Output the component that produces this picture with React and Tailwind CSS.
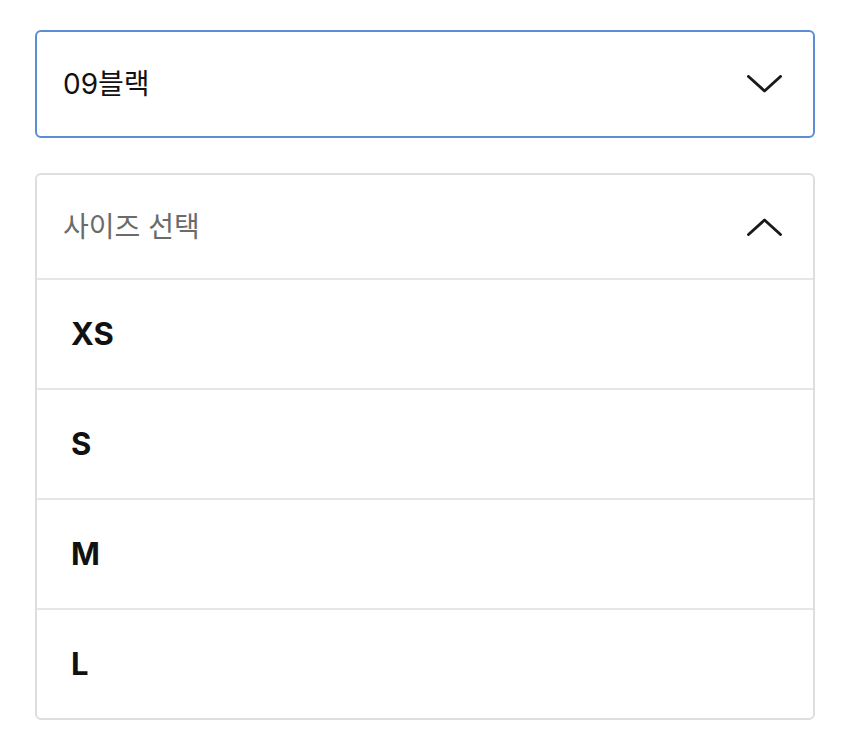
import React from "react";

const sizes = ["XS", "S", "M", "L"];

const Chevron = ({ up }) => (
  <svg width="35" height="18" viewBox="0 0 35 18" fill="none" className="block">
    <polyline
      points={up ? "1.5,16.5 17.5,2 33.5,16.5" : "1.5,1.5 17.5,16 33.5,1.5"}
      stroke="#1a1a1a"
      strokeWidth="2.9"
      strokeLinecap="round"
      strokeLinejoin="round"
    />
  </svg>
);

const App = () => {
  return (
    <div
      className="min-h-[732px] bg-white px-[35px] pt-[30px]"
      style={{ fontFamily: 'Inter, "Noto Sans CJK KR", sans-serif' }}
    >
      <div className="flex h-[108px] items-center justify-between rounded-md border-2 border-[#5b8dd6] pl-[26px] pr-[31px]">
        <span className="text-[28px] text-[#111]">09블랙</span>
        <Chevron />
      </div>

      <div className="mt-[35px] rounded-md border-2 border-[#dedede]">
        <div className="flex h-[103px] items-center justify-between pl-[26px] pr-[31px]">
          <span className="text-[28px] text-[#6b6b6b]">사이즈 선택</span>
          <Chevron up />
        </div>
        {sizes.map((s) => (
          <div
            key={s}
            className="flex h-[110px] items-center border-t-2 border-[#e6e6e6] pl-[34px]"
          >
            <span className="text-[31px] font-bold text-[#111]">{s}</span>
          </div>
        ))}
      </div>
    </div>
  );
};

export default App;
